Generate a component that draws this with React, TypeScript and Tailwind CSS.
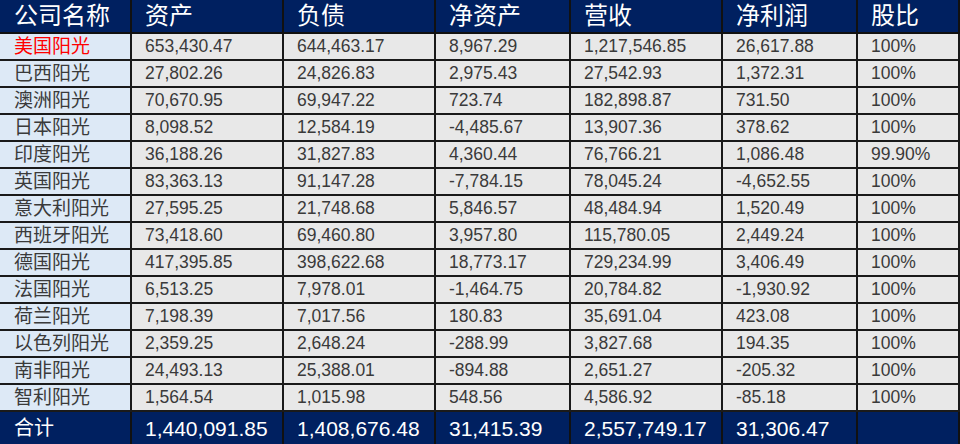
import React from "react";

const rows: string[][] = [
  ["美国阳光", "653,430.47", "644,463.17", "8,967.29", "1,217,546.85", "26,617.88", "100%"],
  ["巴西阳光", "27,802.26", "24,826.83", "2,975.43", "27,542.93", "1,372.31", "100%"],
  ["澳洲阳光", "70,670.95", "69,947.22", "723.74", "182,898.87", "731.50", "100%"],
  ["日本阳光", "8,098.52", "12,584.19", "-4,485.67", "13,907.36", "378.62", "100%"],
  ["印度阳光", "36,188.26", "31,827.83", "4,360.44", "76,766.21", "1,086.48", "99.90%"],
  ["英国阳光", "83,363.13", "91,147.28", "-7,784.15", "78,045.24", "-4,652.55", "100%"],
  ["意大利阳光", "27,595.25", "21,748.68", "5,846.57", "48,484.94", "1,520.49", "100%"],
  ["西班牙阳光", "73,418.60", "69,460.80", "3,957.80", "115,780.05", "2,449.24", "100%"],
  ["德国阳光", "417,395.85", "398,622.68", "18,773.17", "729,234.99", "3,406.49", "100%"],
  ["法国阳光", "6,513.25", "7,978.01", "-1,464.75", "20,784.82", "-1,930.92", "100%"],
  ["荷兰阳光", "7,198.39", "7,017.56", "180.83", "35,691.04", "423.08", "100%"],
  ["以色列阳光", "2,359.25", "2,648.24", "-288.99", "3,827.68", "194.35", "100%"],
  ["南非阳光", "24,493.13", "25,388.01", "-894.88", "2,651.27", "-205.32", "100%"],
  ["智利阳光", "1,564.54", "1,015.98", "548.56", "4,586.92", "-85.18", "100%"],
];

const headers = ["公司名称", "资产", "负债", "净资产", "营收", "净利润", "股比"];
const footer = ["合计", "1,440,091.85", "1,408,676.48", "31,415.39", "2,557,749.17", "31,306.47", ""];

const gridCols = "grid grid-cols-[132px_152px_152px_135px_152px_135px_102px]";

export default function App() {
  return (
    <div
      className="w-[960px] h-[444px] overflow-hidden bg-white"
      style={{ fontFamily: '"Liberation Sans", "Noto Sans CJK SC", sans-serif' }}
    >
      <div className={`${gridCols} h-[34px] bg-[#002060] border-b-2 border-[#111]`}>
        {headers.map((h, i) => (
          <div
            key={i}
            className={`flex items-center border-r-2 border-[#111] text-white text-[24px] leading-none ${
              i === 0 ? "pl-[14px]" : "pl-[13px]"
            }`}
          >
            {h}
          </div>
        ))}
      </div>
      {rows.map((r, ri) => (
        <div key={ri} className={`${gridCols} h-[27px] border-b-2 border-[#1a1a1a]`}>
          {r.map((c, ci) => (
            <div
              key={ci}
              className={`flex items-center border-r-2 border-[#1a1a1a] leading-none ${
                ci === 0
                  ? `bg-[#dde9f6] pl-[14px] text-[19px] ${ri === 0 ? "text-[#ff0000]" : "text-[#3a3a3a]"}`
                  : "bg-[#e8e8e8] pl-[13px] text-[17.5px] text-[#3a3a3a]"
              }`}
            >
              {c}
            </div>
          ))}
        </div>
      ))}
      <div className={`${gridCols} h-[32px] bg-[#002060]`}>
        {footer.map((c, i) => (
          <div
            key={i}
            className={`flex items-center border-r-2 border-[#111] text-white leading-none ${
              i === 0 ? "pl-[14px] text-[20px]" : "pl-[13px] text-[21px]"
            }`}
          >
            {c}
          </div>
        ))}
      </div>
    </div>
  );
}
